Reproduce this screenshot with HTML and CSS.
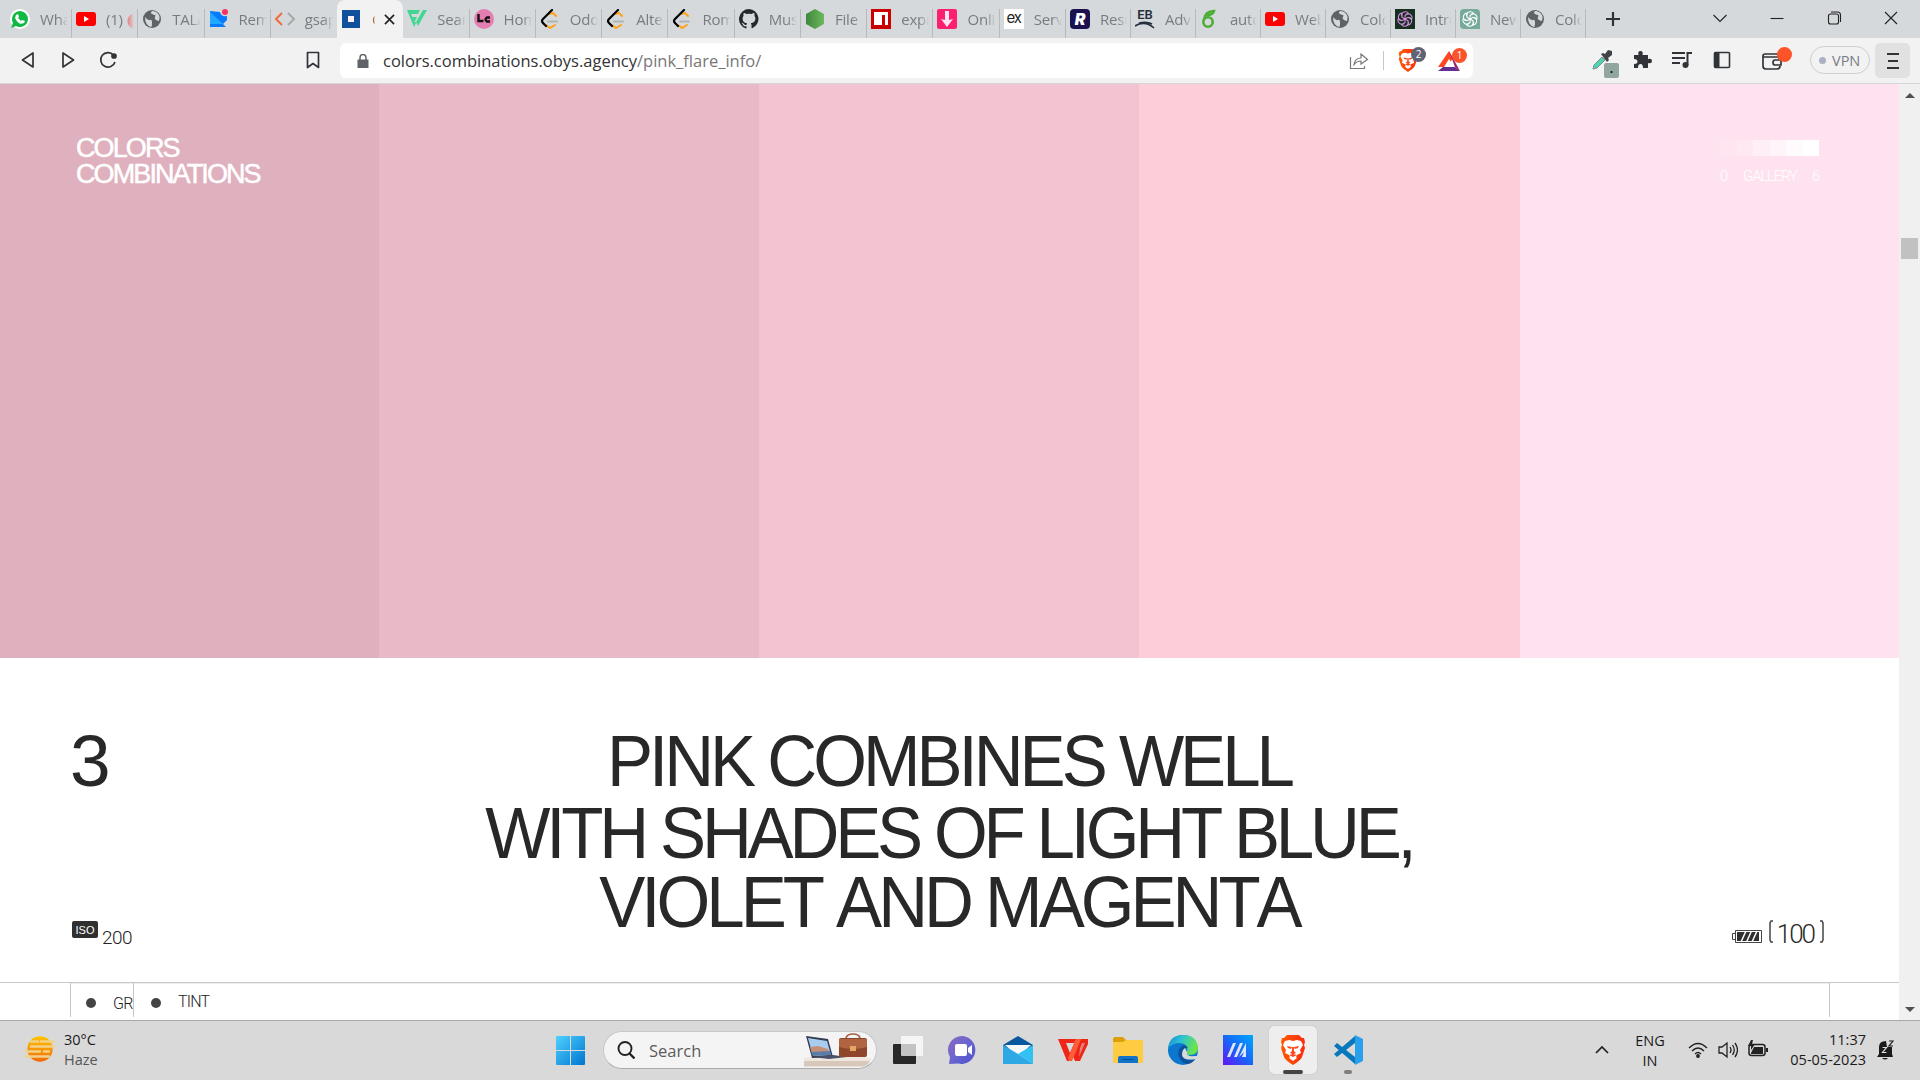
FILE: index.html
```html
<!DOCTYPE html>
<html lang="en">
<head>
<meta charset="utf-8">
<title>Colors Combinations</title>
<link rel="stylesheet" href="styles.css">
</head>
<body>
<svg class="defs" width="0" height="0">
  <symbol id="globe" viewBox="0 0 20 20"><circle cx="10" cy="10" r="9" fill="#5f6368"/><path d="M3 8q3 4 5 3t2 3-1 4q-6-2-6-10zM10 2q-2 2 0 3t3 1 0 2 1 3 3 1q2-6-3-9-2-1-4-1z" fill="#d5d9dc"/></symbol>
  <symbol id="youtube" viewBox="0 0 20 20"><rect y="3" width="20" height="14" rx="3" fill="#f00"/><path d="M8 7v6l5-3z" fill="#fff"/></symbol>
  <symbol id="leet" viewBox="0 0 20 20" fill="none" stroke-linecap="round"><path d="M8 12.500h9" stroke="#b3b3b3" stroke-width="2"/><path d="M9 5l4-1 3 3M6 16l4 3 5-3" stroke="#ffa116" stroke-width="2"/><path d="M12 1L3 10q-2 2 0 4l3 3" stroke="#000" stroke-width="2.200"/></symbol>
  <symbol id="knot" viewBox="0 0 20 20"><g fill="none" stroke="currentColor" stroke-width="1.300"><path id="petal" d="M5.500 6.500V5q1-4 5-4 3 0 4 2L10 5.600v5"/><use href="#petal" transform="rotate(60 10 10)"/><use href="#petal" transform="rotate(120 10 10)"/><use href="#petal" transform="rotate(180 10 10)"/><use href="#petal" transform="rotate(240 10 10)"/><use href="#petal" transform="rotate(300 10 10)"/></g></symbol>
  <symbol id="lion" viewBox="0 0 26 30"><path d="M7 0h12l3 3h2l1 4-1 3 1 3-3 9q-1 3-9 8-8-5-9-8L1 13l1-3-1-3 1-4h2z" fill="url(#flame)"/><path d="M5 6l4-1 4 1 4-1 4 1 2 4-3 5 1 3-4 2-1 2 1 1-4 3-4-3 1-1-1-2-4-2 1-3-3-5z" fill="#fff"/><path d="M7 11l5 1-1 2-3-1zM19 11l-5 1 1 2 3-1zM12 12h2v4l2 2-3 1.500-3-1.500 2-2zM9 20l4-1 4 1-4 2z" fill="#fb4a1e"/></symbol>
  <linearGradient id="flame"><stop stop-color="#ff5a00"/><stop offset="1" stop-color="#fb2c12"/></linearGradient>
  <linearGradient id="win" x2="1" y2="1"><stop stop-color="#4fd2ff"/><stop offset="1" stop-color="#0074d1"/></linearGradient>
  <linearGradient id="sun" x2="0" y2="1"><stop stop-color="#ffc400"/><stop offset="1" stop-color="#f06a0a"/></linearGradient>
  <linearGradient id="chat" x2="1" y2="1"><stop stop-color="#8c6ac0"/><stop offset=".5" stop-color="#6a65cf"/><stop offset="1" stop-color="#4a50d0"/></linearGradient>
  <linearGradient id="edge1" x2="1" y2=".3"><stop stop-color="#168bd8"/><stop offset=".5" stop-color="#30c5cf"/><stop offset="1" stop-color="#6be34b"/></linearGradient>
  <linearGradient id="asus" x1="0" y1="1" x2="1" y2="0"><stop stop-color="#6214f5"/><stop offset=".5" stop-color="#1767f7"/><stop offset="1" stop-color="#00a8ff"/></linearGradient>
  <linearGradient id="node" x2="1"><stop stop-color="#3f873f"/><stop offset="1" stop-color="#6cb85b"/></linearGradient>
</svg>

<header class="tabs">
  <div class="tab first"><svg viewBox="0 0 20 20"><circle cx="10" cy="10" r="10" fill="#fff"/><path d="M1 19l2-5a8 8 0 1 1 3 3z" fill="#10b944"/><path d="M6 6l2-1 1 3-1 1 3 3 1-1 3 1-1 2q-5 3-9-5z" fill="#fff"/></svg><span>What</span></div>
  <div class="tab"><svg><use href="#youtube"/></svg><span>(1) <b class="red">⬤</b></span></div>
  <div class="tab"><svg><use href="#globe"/></svg><span>TALA</span></div>
  <div class="tab"><svg viewBox="0 0 20 20"><path d="M1 2l10 1q1 5 7 4v4l-4 4 3 3H1z" fill="#087bfd"/><path d="M1 3l13 12H1z" fill="#21a9ff"/><circle cx="16" cy="3" r="3" fill="#f4355f"/></svg><span>Rem</span></div>
  <div class="tab nosep"><svg viewBox="0 0 20 20" fill="none" stroke-width="2"><path d="M7 4l-6 6 6 6" stroke="#ef6c3e"/><path d="M13 4l6 6-6 6" stroke="#a8a8a8"/></svg><span>gsap</span></div>
  <div class="tab active nosep"><svg viewBox="0 0 20 20"><path d="M0 1h18v18H0z" fill="#11509a"/><path d="M6 7h6v6H6z" fill="#fff0f5"/></svg><span>C</span><svg class="close" viewBox="0 0 12 12"><path d="M1 1l10 10M11 1L1 11" stroke="#222" stroke-width="1.800"/></svg></div>
  <div class="tab"><svg viewBox="0 0 20 20"><path d="M0 1h13l-2 4H4l1.500 3H10l-2 4h-.5L9 14l-2 4zM16 1h4l-9 16-2-4z" fill="#42d692"/></svg><span>Sear</span></div>
  <div class="tab"><svg viewBox="0 0 20 20"><circle cx="10" cy="10" r="10" fill="#e57eb0"/><path d="M4.500 5v7h5M16 8.500h-3q-3 2 0 4h3" fill="none" stroke="#111" stroke-width="2.400"/></svg><span>Hom</span></div>
  <div class="tab"><svg><use href="#leet"/></svg><span>Odd</span></div>
  <div class="tab"><svg><use href="#leet"/></svg><span>Alte</span></div>
  <div class="tab"><svg><use href="#leet"/></svg><span>Rom</span></div>
  <div class="tab"><svg viewBox="0 0 16 16"><path d="M8 0a8 8 0 0 0-2.500 15.600c.4.100.5-.2.500-.4v-1.500c-2.200.5-2.700-1-2.700-1-.4-.9-.9-1.200-.9-1.200-.7-.5.100-.5.100-.5.800.1 1.200.8 1.200.8.700 1.300 1.900.9 2.300.7.100-.5.300-.9.500-1.100-1.800-.2-3.600-.9-3.600-4 0-.9.300-1.600.8-2.100-.1-.2-.4-1 .1-2.100 0 0 .7-.2 2.200.8a7.600 7.600 0 0 1 4 0c1.500-1 2.200-.8 2.200-.8.400 1.100.2 1.900.1 2.100.5.600.8 1.300.8 2.100 0 3.100-1.900 3.700-3.700 3.900.3.300.6.800.6 1.500v2.200c0 .2.100.5.600.4A8 8 0 0 0 8 0z" fill="#24292f"/></svg><span>Mus</span></div>
  <div class="tab"><svg viewBox="0 0 20 20"><path d="M10 0l9 5v10l-9 5-9-5V5z" fill="url(#node)"/></svg><span>File</span></div>
  <div class="tab"><svg viewBox="0 0 20 20"><path d="M0 0h20v20H0z" fill="#cb0000"/><path d="M3 3h14v13h-3V6h-3v10H3z" fill="#fff"/></svg><span>expr</span></div>
  <div class="tab"><svg viewBox="0 0 20 20"><rect width="20" height="20" rx="2" fill="#ff1f70"/><path d="M8 2h4v9l4-1-6 8-6-8 4 1z" fill="#ffe3ee"/></svg><span>Onli</span></div>
  <div class="tab"><span class="ex">ex</span><span>Serv</span></div>
  <div class="tab b"><span class="rr">R</span><span>Resu</span></div>
  <div class="tab b"><span class="eb">EB<svg viewBox="0 0 20 8"><path d="M0 5Q10-1 19 7M4 2q8-2 13 1" fill="none" stroke="#26303c" stroke-width="1.600"/></svg></span><span>Adv</span></div>
  <div class="tab b"><svg viewBox="0 0 20 20" fill="none" stroke="#4cae36" stroke-width="2.600"><circle cx="8" cy="13" r="4.700"/><path d="M4 11Q5 2 14 2q-1 4-7 4"/></svg><span>auto</span></div>
  <div class="tab b"><svg><use href="#youtube"/></svg><span>Web</span></div>
  <div class="tab b"><svg><use href="#globe"/></svg><span>Colo</span></div>
  <div class="tab b"><svg class="dk"><use href="#knot"/></svg><span>Intro</span></div>
  <div class="tab b"><svg class="gr"><use href="#knot"/></svg><span>New</span></div>
  <div class="tab b"><svg><use href="#globe"/></svg><span>Colo</span></div>
  <svg class="plus" viewBox="0 0 16 16"><path d="M8 1v14M1 8h14" stroke="#303438" stroke-width="2.200"/></svg>
  <div class="window-buttons">
    <svg viewBox="0 0 14 14"><path d="M.5 4L7 10.500 13.500 4"/></svg>
    <svg viewBox="0 0 14 14"><path d="M.5 7.500h13"/></svg>
    <svg viewBox="0 0 14 14"><rect x="1.500" y="3" width="10" height="10" rx="2"/><path d="M4 1h6.500q3 0 3 3v7"/></svg>
    <svg viewBox="0 0 14 14"><path d="M1 1l12 12M13 1L1 13"/></svg>
  </div>
</header>

<nav class="toolbar">
  <div class="nav-icons">
    <svg viewBox="0 0 18 18"><path d="M14 2v14L3.500 9z"/></svg>
    <svg viewBox="0 0 18 18"><path d="M4 2v14L14.500 9z"/></svg>
    <svg viewBox="0 0 18 18"><path d="M16 11a7.300 7.300 0 1 1-1.500-7"/><circle cx="15" cy="5" r="2" fill="#303438"/></svg>
  </div>
  <svg class="bookmark" viewBox="0 0 18 18"><path d="M3.500 1.500h11v15L9 12.500l-5.500 4z"/></svg>
  <div class="address">
    <svg class="lock" viewBox="0 0 12 14"><path d="M.5 5.500h11V14H.500z" fill="#5f6368"/><path d="M3 6V3.500a3 3 0 0 1 6 0V6" fill="none" stroke="#5f6368" stroke-width="1.500"/></svg>
    <span class="url">colors.combinations.obys.agency<i>/pink_flare_info/</i></span>
    <svg class="share" viewBox="0 0 20 18"><path d="M1.500 5v11.500h14V14M5 12.500Q6 6 12 6V2l6.500 5.500L12 12V9Q8 9 5 12.500z"/></svg>
    <i class="rule"></i>
    <span class="shield"><svg viewBox="0 0 26 30"><use href="#lion"/></svg><em>2</em></span>
    <span class="rewards"><svg viewBox="0 0 22 20"><path d="M11 0l4 7-6 9H0z" fill="#ff4724"/><path d="M11 0l11 20-5-4z" fill="#9e1f63"/><path d="M0 20l5-4h12l5 4z" fill="#662d91"/><path d="M11 8l5 8H6z" fill="#fff"/></svg><em>1</em></span>
  </div>
  <div class="extensions">
    <span class="picker"><svg viewBox="0 0 20 20"><path d="M1 19l1-4 8-8 3 3-8 8z" fill="#4bd5b2" stroke="#888" stroke-width="1"/><path d="M9 4l2-1 2 1 3-4 4 1v4l-4 3 1 2-2 2z" fill="#3f4246"/></svg><em>.</em></span>
    <svg viewBox="0 0 20 20"><path d="M2 5h4.500q-1-4 2-4t2 4H16v4q4-1 4 2t-4 2v5h-5q0-4-2.500-4T6 18H2v-4q3.500 0 3.500-2.500T2 9z" fill="#303438"/></svg>
    <svg viewBox="0 0 20 18"><path d="M0 2h13M0 7h13M0 12h8M15.500 14V2H20" fill="none" stroke="#303438" stroke-width="2"/><circle cx="13.500" cy="14" r="3" fill="#303438"/></svg>
    <svg viewBox="0 0 20 20"><rect x="2.500" y="2.500" width="15" height="15" rx="1" fill="none" stroke="#303438" stroke-width="1.600"/><path d="M3 3h4.500v14H3z" fill="#303438"/></svg>
  </div>
  <span class="wallet"><svg viewBox="0 0 20 18"><path d="M17 7V4L15 2H3Q1 2 1 4v10q0 3 3 3h11q3 0 3-3M1 5h15M19 8h-6q-2 0-2 2.500t2 2.500h6z" fill="none" stroke="#303438" stroke-width="1.700"/></svg></span>
  <span class="vpn"><i></i>VPN</span>
  <span class="menu"><i></i><i></i><i></i></span>
</nav>

<div class="viewport">
<main>
  <section class="palette">
    <div class="c1"><h2 class="logo">COLORS<br>COMBINATIONS</h2></div>
    <div class="c2"></div><div class="c3"></div><div class="c4"></div>
    <div class="c5">
      <div class="gallery">
        <div class="steps"><i></i><i></i><i></i><i></i><i></i><i></i></div>
        <div class="labels"><span>0</span><span>GALLERY</span><span>6</span></div>
      </div>
    </div>
  </section>
  <section class="statement">
    <div class="side">
      <div class="number">3</div>
      <div class="iso"><b>ISO</b><span>200</span></div>
    </div>
    <h1><span class="l1">PINK COMBINES WELL</span><span class="l2">WITH SHADES OF LIGHT BLUE,</span><span class="l3">VIOLET AND MAGENTA</span></h1>
    <div class="charge">
      <svg viewBox="0 0 30 13"><path d="M3.500.5h26v12h-26zM3 3.500H.500v6H3" fill="none" stroke="#444"/><path d="M5 2h22v9H5z" fill="#303030"/><path d="M9 12l5-11M14.500 12l5-11M20 12l5-11" stroke="#fff" stroke-width="1.500"/></svg>
      <svg class="bracket" viewBox="0 0 4 23"><path d="M4 1H2L1 3v17l1 2h2"/></svg><span>100</span><svg class="bracket" viewBox="0 0 4 23"><path d="M0 1h2l1 2v17l-1 2H0"/></svg>
    </div>
  </section>
  <section class="filters">
    <div class="filter-row"><div class="cell narrow"><i></i><span>GR</span></div><div class="cell"><i></i><span>TINT</span></div></div>
  </section>
</main>
<aside class="scrollbar"><i class="up"></i><i class="thumb"></i><i class="down"></i></aside>
</div>

<footer class="taskbar">
  <div class="weather">
    <svg viewBox="0 0 30 28"><circle cx="15" cy="14" r="12.700" fill="url(#sun)"/><path d="M6 6.500h7M16 6.500h13M6 11.500h23M1 16.500h14M19 16.500h5M1 21.500h23" stroke="#f1d28b" stroke-width="2.400" stroke-linecap="round"/></svg>
    <div>30°C<br><span>Haze</span></div>
  </div>
  <svg class="start" viewBox="0 0 29 29"><path d="M0 1Q0 0 1 0h13v14H0zM15 0h13q1 0 1 1v13H15zM0 15h14v14H1q-1 0-1-1zM15 15h14v13q0 1-1 1H15z" fill="url(#win)"/></svg>
  <div class="search">
    <svg class="lens" viewBox="0 0 18 18"><circle cx="8" cy="7.500" r="6.500" fill="none" stroke="#222" stroke-width="1.900"/><path d="M12.500 12.500l5 5" stroke="#222" stroke-width="2.300"/></svg>
    <span>Search</span>
    <svg class="desk" viewBox="0 0 67 34"><path d="M0 25l8-1h52l7 1v3H0z" fill="#eee6df"/><path d="M0 28h66q-3 5-7 5.500H0z" fill="#d8c8b9"/><path d="M2 3l22 3 5 18-21 1z" fill="#333b50"/><path d="M4 5l19 3 4 14-18 1z" fill="#a9cdf0"/><path d="M6 14l8-1 10 3 1 3-17 1z" fill="#c58f78"/><path d="M7 19l19-1 1 4-18 1z" fill="#5c7da8"/><path d="M8 24l21-2 14 2-18 2z" fill="#4a5069"/><path d="M42 5q1-4 7-4t7 4" fill="none" stroke="#a5613f" stroke-width="1.700"/><rect x="35" y="5" width="28" height="19" rx="2" fill="#8e452a"/><path d="M35 6h28v8q-14 4-28 0z" fill="#b06442"/><path d="M46 13h6v5h-6z" fill="#e1a863"/></svg>
  </div>
  <div class="apps">
    <div><svg viewBox="0 0 30 30"><rect x="0" y="9" width="23" height="20" rx="1" fill="#282828"/><rect x="8" y="1" width="22" height="20" rx="1" fill="#fff" fill-opacity=".72"/></svg></div>
    <div><svg viewBox="0 0 30 30"><path d="M15 1a14 14 0 1 1-5 27.500L1 29l1-7A14 14 0 0 1 15 1z" fill="url(#chat)"/><rect x="7" y="9" width="12" height="12" rx="2" fill="#fff"/><path d="M20 13l4-3v10l-4-3z" fill="#fff"/></svg></div>
    <div><svg viewBox="0 0 30 30"><path d="M0 10l15-9 15 9v5H0z" fill="#0b579f"/><path d="M2 10h26L15 22z" fill="#f5f7f8"/><path d="M0 10l15 9L30 29H0z" fill="#2ea8e5"/><path d="M30 10v19L15 19z" fill="#31c1f2"/></svg></div>
    <div><svg viewBox="0 0 30 30"><path d="M0 4h18l-2 4H8l4 10 6-14h12v5l-8 17h-5l-3-7-3 7H9z" fill="#ed2618"/><path d="M18 4h5l-6 15-3 7h-3l-1-3z" fill="#ff5c37"/><path d="M22 13l2-5h3l-6 14z" fill="#d9d9d9" fill-opacity=".5"/></svg></div>
    <div><svg viewBox="0 0 30 30"><path d="M0 4q0-2 2-2h8l3 3h17v6H0z" fill="#dda006"/><path d="M0 7h10l3-2h17v23H0z" fill="#fecb41"/><path d="M5 28v-5q0-2 2-2h16q2 0 2 2v5z" fill="#1274c9"/><path d="M9 24.500h12" stroke="#0a4f91"/></svg></div>
    <div><svg viewBox="0 0 30 30"><circle cx="15" cy="15" r="15" fill="#0b77cf"/><path d="M0 14Q1 0 15 0t15 13q0 7-8 7-4 0-3-3 2-9-9-9Q3 9 0 14z" fill="url(#edge1)"/><path d="M13 12q-5 5-1 12 3 5 8 5 5-1 8-6-6 4-11 1-5-4-2-9 2-3 5-2-3-5-7-1z" fill="#10529a"/><path d="M19 17q-1 5 8 4h3l-2 3q-13 2-14-4 0-5 3-7z" fill="#d9d9d9"/></svg></div>
    <div><svg viewBox="0 0 30 30"><path d="M0 0h30v30H0z" fill="url(#asus)"/><path d="M4 22L10 8h3L7 22zM11 22l6-14h3l-6 14zM16 22l7-14v14h-4l2-5" fill="#dfe7ff"/></svg></div>
    <div class="open"><svg viewBox="0 0 26 30"><use href="#lion"/></svg><i></i></div>
    <div class="running"><svg viewBox="0 0 30 30"><path d="M22 1v28L1 11l3-3 18 14V8L4 22l-3-3z" fill="#0878bd"/><path d="M22 0l8 4v22l-8 4z" fill="#28a0ec"/></svg><i></i></div>
  </div>
  <div class="tray">
    <svg class="chev" viewBox="0 0 14 9"><path d="M1 8l6-6 6 6" fill="none" stroke="#222" stroke-width="1.700"/></svg>
    <div class="lang">ENG<br>IN</div>
    <svg class="wifi" viewBox="0 0 20 16" fill="none" stroke="#222" stroke-width="1.400"><path d="M1 6q9-9 18 0M4 9q6-6 12 0M7 12q3-3 6 0"/><circle cx="10" cy="14" r="1.200" fill="#222"/></svg>
    <svg class="vol" viewBox="0 0 20 18" fill="none" stroke="#222" stroke-width="1.300"><path d="M1 6h3l5-4v14l-5-4H1zM12 6q2 3 0 6M14.500 4q3.500 5 0 10M17 2q5 7 0 14"/></svg>
    <svg class="bat" viewBox="0 0 20 17"><rect x="1" y="4.500" width="16" height="11" rx="2.500" fill="none" stroke="#222" stroke-width="1.500"/><path d="M3 13l3-6h9v7H3zM18 8h2v4h-2zM3 0L0 6h3v4l4-6H4l1-4z" fill="#222"/></svg>
    <div class="clock">11:37<br>05-05-2023</div>
    <svg class="bell" viewBox="0 0 17 20"><path d="M2 14V7q0-6 7-6l1 6h5v7l1 3H0zM5 18h6q-3 3-6 0z" fill="#1b1b1b"/><path d="M5.500 7.500h4l-4 5h4" fill="none" stroke="#ddd" stroke-width="1.200"/><path d="M12 1h4l-4 5h4" fill="none" stroke="#1b1b1b" stroke-width="1.200"/></svg>
  </div>
</footer>
</body>
</html>
```
FILE: styles.css
```css
* { box-sizing: border-box; }
body {
  margin: 0;
  width: 1920px;
  height: 1080px;
  overflow: hidden;
  display: flex;
  flex-direction: column;
  font-family: "Open Sans", "Noto Sans", sans-serif;
}
svg { display: block; flex: none; }
i, em { font-style: normal; }
.defs { position: absolute; }

/* Tab strip */
.tabs { flex: none; height: 38px; background: #d5d9dc; display: flex; align-items: flex-start; }
.tab { flex: none; width: 66.27px; height: 38px; padding: 0 4px; display: flex; align-items: center; gap: 10px; position: relative; }
.tab.first { width: 72px; padding-left: 10px; }
.tab.b { width: 65px; }
.tab > svg { width: 20px; height: 20px; }
.tab > span:last-of-type {
  flex: 1; min-width: 0; overflow: hidden; white-space: nowrap;
  font-size: 15px; line-height: 20px; color: #777c80; letter-spacing: -.2px;
  mask-image: linear-gradient(90deg, #000 65%, transparent);
}
.tab::after { content: ""; position: absolute; right: 0; top: 9px; width: 1px; height: 29px; background: #b6babd; }
.tab.nosep::after { display: none; }
.tab.active { background: #f2f2f2; border-radius: 8px 8px 0 0; padding-left: 5px; }
.tab.active > span { color: #a5692c; max-width: 3px; }
.tab.active > .close { width: 11px; height: 11px; margin-left: -1px; }
.red { color: #ef5350; }
.ex { width: 20px; height: 20px; background: #fff; color: #222; font: 15px/17px Inter, sans-serif; text-align: center; letter-spacing: -1px; }
.rr { width: 20px; height: 20px; border-radius: 4px; background: #1c1150; color: #fff; font: italic 900 16px/20px Inter, sans-serif; text-align: center; }
.eb { width: 20px; height: 20px; font: 600 13px/11px Roboto, sans-serif; color: #26303c; text-align: center; }
.eb svg { width: 20px; height: 8px; margin-top: 1px; }
.tab > .dk { background: #15301e; color: #d68de0; padding: 2px; }
.tab > .gr { background: #75a99a; color: #fff; padding: 2px; border-radius: 4px 4px 0 4px; }
.plus { width: 16px; height: 16px; margin: 11px 0 0 19px; }
.window-buttons { margin: 11px 22px 0 auto; display: flex; gap: 43px; }
.window-buttons svg { width: 14px; height: 14px; fill: none; stroke: #222; stroke-width: 1.100; overflow: visible; }

/* Address row */
.toolbar { flex: none; height: 46px; background: #f2f2f2; border-bottom: 1px solid #d3d6d9; display: flex; align-items: flex-start; padding: 5px 10px 0 19px; }
.nav-icons { display: flex; gap: 22px; padding-top: 8px; }
.nav-icons svg, .bookmark { width: 18px; height: 18px; fill: none; stroke: #303438; stroke-width: 1.700; stroke-linejoin: round; }
.bookmark { margin: 8px 18px 0 187px; }
.address { width: 1133px; height: 35px; border-radius: 6px; background: #fff; display: flex; align-items: center; padding: 0 6px 0 17px; }
.lock { width: 12px; height: 14px; }
.url { margin-left: 14px; font-size: 16.500px; line-height: 34px; padding-top: 1px; color: #333; flex: 1; white-space: nowrap; }
.url i { color: #777; }
.share { width: 20px; height: 18px; fill: none; stroke: #777; stroke-width: 1.200; }
.rule { width: 1px; height: 19px; background: #c6c6c6; margin: 0 14px; }
.shield, .rewards, .picker, .wallet { position: relative; display: block; }
.shield svg { width: 20px; height: 23px; }
.shield { margin-right: 20px; }
.rewards svg { width: 22px; height: 20px; }
.rewards { margin-right: 7px; }
.shield em, .rewards em { position: absolute; top: -2px; left: 13px; width: 15px; height: 15px; border-radius: 50%; background: #5f6373; color: #fff; font-size: 10px; line-height: 15px; text-align: center; }
.rewards em { left: 14px; top: -3px; background: #fb542b; }
.extensions { margin-left: 119px; display: flex; gap: 20px; padding-top: 7px; }
.extensions svg { width: 20px; height: 20px; }
.picker em { position: absolute; left: 12px; top: 13px; width: 15px; height: 15px; border-radius: 2px; background: #91a69f; color: #111; font: bold 12px/12px "Open Sans", sans-serif; text-align: center; }
.wallet { margin: 9px 0 0 30px; }
.wallet svg { width: 20px; height: 18px; }
.wallet::after { content: ""; position: absolute; width: 15px; height: 15px; left: 15px; top: -5px; border-radius: 50%; background: #fc5428; }
.vpn { margin: 3px 0 0 28px; width: 60px; height: 28px; border: 1px solid #cccfd3; border-radius: 14px; display: flex; align-items: center; gap: 6px; padding-left: 8px; font-size: 14.500px; color: #777c86; }
.vpn i { width: 7px; height: 7px; border-radius: 50%; background: #adafc4; }
.menu { margin-left: auto; width: 35px; height: 35px; background: #e1e1e1; border-radius: 5px; display: flex; flex-direction: column; align-items: center; justify-content: center; gap: 5px; }
.menu i { width: 12px; height: 2px; background: #303438; }
.menu i:nth-child(2) { width: 10px; }

/* Web page */
.viewport { flex: none; height: 936px; display: flex; }
main { width: 1899px; background: #fff; overflow: hidden; display: flex; flex-direction: column; }
.palette { flex: none; height: 574px; display: grid; grid-template-columns: 379px 380px 380px 381px 379px; }
.c1 { background: #dfb0be; }
.c2 { background: #e8b9c7; }
.c3 { background: #f2c3d1; }
.c4 { background: #fdcdda; }
.c5 { background: #fee2ef; }
.logo { margin: 52px 0 0 76px; font: 400 27px/25.500px "Liberation Sans", Arial, sans-serif; letter-spacing: -1.900px; color: #fff; -webkit-text-stroke: .5px #fff; }
.gallery { width: 100px; margin: 56px 0 0 200px; color: #fff; }
.steps { display: flex; height: 16px; width: 99px; }
.steps i { flex: 1; background: #fff; }
.steps i:nth-child(1) { opacity: .1; }
.steps i:nth-child(2) { opacity: .22; }
.steps i:nth-child(3) { opacity: .42; }
.steps i:nth-child(4) { opacity: .62; }
.steps i:nth-child(5) { opacity: .82; }
.labels { display: flex; justify-content: space-between; margin-top: 12px; font: 300 15px/16px Roboto, sans-serif; }
.labels span:nth-child(2) { letter-spacing: -1.200px; }
.statement { flex: none; height: 324px; display: flex; color: #282828; position: relative; padding: 0 75px 0 71px; }
.side { flex: 1; }
.number { height: 262px; padding-top: 67px; font: 73px/72px "Liberation Sans", Arial, sans-serif; text-indent: -1px; }
.iso { display: flex; align-items: flex-start; margin-left: 1px; gap: 4px; padding-top: 1px; }
.iso b { width: 26px; height: 17px; border-radius: 2px; background: #303030; color: #fff; font: 11px/18px "Liberation Sans", sans-serif; text-align: center; }
.iso span { font: 300 19px/20px Roboto, sans-serif; padding-top: 7px; letter-spacing: -.6px; color: #222; }
h1 { margin: 0; padding: 67px 0 0 2px; width: 1000px; display: flex; flex-direction: column; align-items: center; font: 400 72.700px/72px "Liberation Sans", Arial, sans-serif; font-kerning: none; letter-spacing: -4.200px; white-space: nowrap; transform: scaleX(.95); }
.l2 { letter-spacing: -4.400px; }
.l3 { margin-top: -3px; }
.charge { flex: 1; display: flex; justify-content: flex-end; align-items: flex-start; padding-top: 262px; }
.charge > svg:first-child { width: 30px; height: 13px; margin: 10px 7px 0 0; }
.bracket { width: 4px; height: 23px; fill: none; stroke: #444; stroke-width: 1.500; }
.charge span { font: 300 26px/28px Roboto, sans-serif; letter-spacing: -2px; width: 47px; text-align: right; padding-right: 6px; }
.filters { flex: none; height: 38px; border-top: 1px solid #c8c8c8; padding: 0 69px 0 70px; }
.filter-row { height: 34px; display: flex; border: 1px solid #c8c8c8; border-width: 0 1px; box-shadow: inset 0 1px #eee; }
.cell { display: flex; align-items: center; padding: 6px 0 0 17px; font: 300 16px/16px Roboto, sans-serif; color: #222; letter-spacing: -.8px; }
.cell.narrow { width: 63px; border-right: 1px solid #c8c8c8; padding-left: 15px; }
.cell i { flex: none; width: 10px; height: 10px; border-radius: 50%; background: #444; margin-right: 17px; }
.cell span { padding-top: 1px; }
.cell:not(.narrow) span { margin-top: -4px; }
.scrollbar { width: 21px; background: #f0f0f0; display: flex; flex-direction: column; align-items: center; }
.up { margin-top: 9px; border: 5px solid transparent; border-top: 0; border-bottom-color: #505050; }
.thumb { margin-top: 140px; width: 17px; height: 21px; background: #c1c1c1; }
.down { margin: auto 0 8px; border: 5px solid transparent; border-bottom: 0; border-top-color: #505050; }

/* Taskbar */
.taskbar { flex: none; height: 60px; background: #d9d9d9; border-top: 1px solid #a9a9a9; display: flex; font-size: 14.500px; line-height: 20px; color: #1b1b1b; }
.weather { width: 556px; display: flex; padding: 9px 0 0 25px; gap: 9px; }
.weather svg { width: 30px; height: 28px; margin-top: 5px; }
.weather span { color: #555; }
.start { width: 29px; height: 29px; margin-top: 15px; }
.search { margin: 10px 3px 0 18px; width: 274px; height: 38px; border-radius: 19px; background: #f4f4f4; border: 1px solid #c7c7c7; border-bottom-color: #aaa; display: flex; align-items: center; padding: 0 5px 0 13px; font-size: 16.500px; color: #5b5b5b; }
.search span { padding-top: 2px; }
.lens { width: 18px; height: 18px; margin-right: 14px; }
.desk { width: 67px; height: 34px; margin-left: auto; }
.apps { display: flex; padding-top: 5px; }
.apps div { width: 48px; height: 48px; margin: 0 3.500px; border-radius: 5px; display: flex; justify-content: center; padding-top: 9px; position: relative; }
.apps svg { width: 30px; height: 30px; }
.apps .open { background: #eee; box-shadow: 0 0 1px #999; }
.apps .open i, .apps .running i { position: absolute; bottom: 0; width: 20px; height: 4px; border-radius: 2px; background: #444; }
.apps .running i { width: 8px; background: #808080; }
.tray { margin-left: auto; display: flex; align-items: flex-start; padding-right: 26px; }
.tray .chev { width: 14px; height: 9px; margin: 24px 26px 0 0; }
.lang { text-align: center; width: 30px; margin: 10px 23px 0 0; }
.wifi { width: 20px; height: 16px; margin: 21px 10px 0 0; }
.vol { width: 20px; height: 18px; margin: 20px 10px 0 0; }
.bat { width: 20px; height: 17px; margin: 19px 0 0; }
.clock { width: 98px; text-align: right; margin: 9px 11px 0 0; white-space: nowrap; }
.bell { width: 17px; height: 20px; margin-top: 19px; }
```
